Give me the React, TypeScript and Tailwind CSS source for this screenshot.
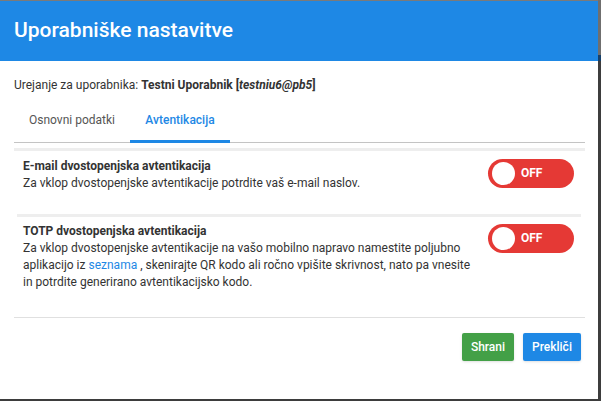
import React from 'react'

function Toggle() {
  return (
    <div className="flex h-[29px] w-[86px] items-center rounded-full bg-[#e53935] pl-[4px]">
      <div className="h-[23px] w-[23px] rounded-full bg-white" />
      <span className="ml-[6px] text-[12px] font-bold text-white">OFF</span>
    </div>
  )
}

export default function App() {
  return (
    <div className="flex h-[401px] w-[601px] bg-[#3d3d3d] font-['Roboto',sans-serif]">
      <div className="flex h-[399px] w-[598px] flex-col border-t border-[#7a7a7a] bg-white">
        {/* Header */}
        <div className="flex h-[60px] items-center bg-[#1e88e5] px-[14px]">
          <h1 className="text-[21px] font-medium text-white">Uporabniške nastavitve</h1>
        </div>

        <div className="px-[14px] pr-[13px] text-[12px] leading-[17px]">
          <p className="mt-[16px] text-[#333]">
            Urejanje za uporabnika: <b className="font-bold">Testni Uporabnik [<i>testniu6@pb5</i>]</b>
          </p>

          {/* Tabs */}
          <div className="mt-[10px] flex border-b border-[#c4c4c4]">
            <div className="w-[116px] pb-[13px] pt-[8px] text-center text-[#555]">Osnovni podatki</div>
            <div className="-mb-px w-[100px] border-b-[3px] border-[#1e88e5] pb-[11px] pt-[8px] text-center font-medium text-[#1e88e5]">
              Avtentikacija
            </div>
          </div>

          <div className="mt-[5px] h-[3px] bg-[#eeeeee]" />

          {/* E-mail 2FA */}
          <div className="flex items-start justify-between pl-[9px] pr-[11px] pt-[7px]">
            <div className="text-[#333]">
              <div className="font-bold">E-mail dvostopenjska avtentikacija</div>
              <div>Za vklop dvostopenjske avtentikacije potrdite vaš e-mail naslov.</div>
            </div>
            <div className="mt-px">
              <Toggle />
            </div>
          </div>

          <div className="ml-[3px] mr-[4px] mt-[22px] h-[3px] bg-[#eeeeee]" />

          {/* TOTP 2FA */}
          <div className="flex items-start justify-between pl-[9px] pr-[11px] pt-[6px]">
            <div className="w-[454px] text-[#333]">
              <div className="font-bold">TOTP dvostopenjska avtentikacija</div>
              <div>
                Za vklop dvostopenjske avtentikacije na vašo mobilno napravo namestite poljubno aplikacijo iz{' '}
                <a className="text-[#1e88e5]">seznama</a> , skenirajte QR kodo ali ročno vpišite skrivnost, nato pa vnesite
                in potrdite generirano avtentikacijsko kodo.
              </div>
            </div>
            <div className="mt-px">
              <Toggle />
            </div>
          </div>

          <div className="mt-[26px] h-px bg-[#e0e0e0]" />

          {/* Actions */}
          <div className="mt-[15px] flex justify-end gap-[9px] pr-[4px]">
            <button className="h-[28px] w-[52px] rounded-[2px] bg-[#43a047] text-[12px] font-medium text-white shadow-sm">
              Shrani
            </button>
            <button className="h-[28px] w-[58px] rounded-[2px] bg-[#1e88e5] text-[12px] font-medium text-white shadow-sm">
              Prekliči
            </button>
          </div>
        </div>
      </div>
      <div className="flex w-[3px] flex-col">
        <div className="h-[55px] bg-[#6f6f6f]" />
        <div className="h-[6px] bg-[#16406a]" />
        <div className="flex-1 bg-[#3d3d3d]" />
      </div>
    </div>
  )
}
